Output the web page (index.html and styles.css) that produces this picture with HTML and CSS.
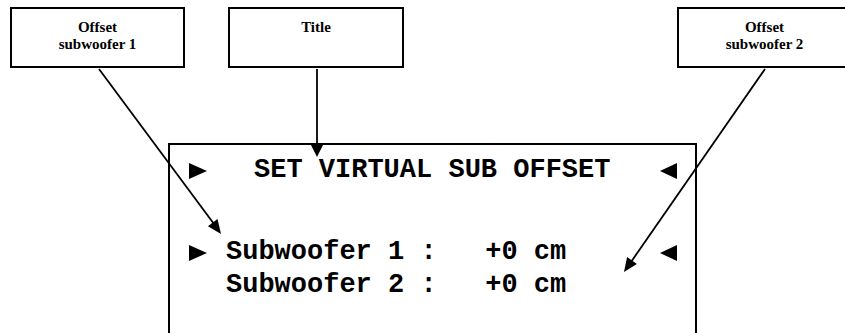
FILE: index.html
```html
<!DOCTYPE html>
<html lang="en">
<head>
    <meta charset="UTF-8">
    <meta name="viewport" content="width=device-width, initial-scale=1.0">
    <title>Set virtual sub offset</title>
    <link rel="stylesheet" href="styles.css">
</head>
<body>
    <div class="page">
        <!-- Opisy nad wyswietlaczem -->
        <div class="callouts">
            <div class="callout callout-sub1">Offset<br>subwoofer 1</div>
            <div class="callout callout-title">Title</div>
            <div class="callout callout-sub2">Offset<br>subwoofer 2</div>
        </div>

        <!-- Wyswietlacz -->
        <div class="display">
            <div class="row row-title">
                <span class="marker"><svg viewBox="0 0 18 16"><polygon points="0,0 18,8 0,16"/></svg></span>
                <span class="text title-text">SET VIRTUAL SUB OFFSET</span>
                <span class="marker"><svg viewBox="0 0 17 16"><polygon points="17,0 0,8 17,16"/></svg></span>
            </div>
            <div class="row row-sub1">
                <span class="marker"><svg viewBox="0 0 18 16"><polygon points="0,0 18,8 0,16"/></svg></span>
                <span class="text">Subwoofer 1 :   +0 cm</span>
                <span class="marker"><svg viewBox="0 0 17 16"><polygon points="17,0 0,8 17,16"/></svg></span>
            </div>
            <div class="row">
                <span class="marker"></span>
                <span class="text">Subwoofer 2 :   +0 cm</span>
                <span class="marker"></span>
            </div>
        </div>

        <!-- Strzalki -->
        <svg class="arrows" width="845" height="333" viewBox="0 0 845 333">
            <line x1="99" y1="69" x2="214" y2="224"/>
            <polygon points="221,234 207.9,226.3 217.5,219.1"/>
            <line x1="317" y1="69" x2="317" y2="146"/>
            <polygon points="317,157 311,145 323,145"/>
            <line x1="765" y1="69" x2="631" y2="262"/>
            <polygon points="624,272 627.1,257.1 636.9,263.9"/>
        </svg>
    </div>
</body>
</html>
```

FILE: styles.css
```css
body {
    margin: 0;
    padding: 0;
    background-color: #fff;
}

.page {
    position: relative;
    width: 845px;
    height: 333px;
    overflow: hidden;
}

.callouts {
    display: flex;
    padding: 7px 0 0 10px;
}

.callout {
    flex-shrink: 0;
    box-sizing: border-box;
    width: 175px;
    height: 61px;
    border: 2px solid #000;
    padding-top: 10px;
    font-family: "Liberation Serif", "Times New Roman", serif;
    font-weight: bold;
    font-size: 15px;
    line-height: 17px;
    text-align: center;
    color: #000;
}

.callout-title {
    width: 176px;
    margin-left: 43px;
}

.callout-sub2 {
    margin-left: 273px;
}

.display {
    box-sizing: border-box;
    width: 529px;
    height: 220px;
    margin: 75px 0 0 168px;
    border: 2px solid #000;
    border-bottom: none;
    padding: 9px 18px 0 19px;
}

.row {
    display: grid;
    grid-template-columns: 18px 1fr 17px;
    column-gap: 19px;
    align-items: center;
    font-family: "Liberation Mono", "Courier New", monospace;
    font-weight: bold;
    font-size: 27px;
    line-height: 33px;
    color: #000;
}

.row-sub1 {
    margin-top: 49px;
}

.text {
    white-space: pre;
}

.title-text {
    padding-left: 28px;
}

.marker {
    display: flex;
    height: 16px;
}

.marker svg {
    width: 100%;
    height: 16px;
    fill: #000;
}

.arrows {
    position: absolute;
    left: 0;
    top: 0;
    pointer-events: none;
}

.arrows line {
    stroke: #000;
    stroke-width: 1.8;
}

.arrows polygon {
    fill: #000;
}
```
